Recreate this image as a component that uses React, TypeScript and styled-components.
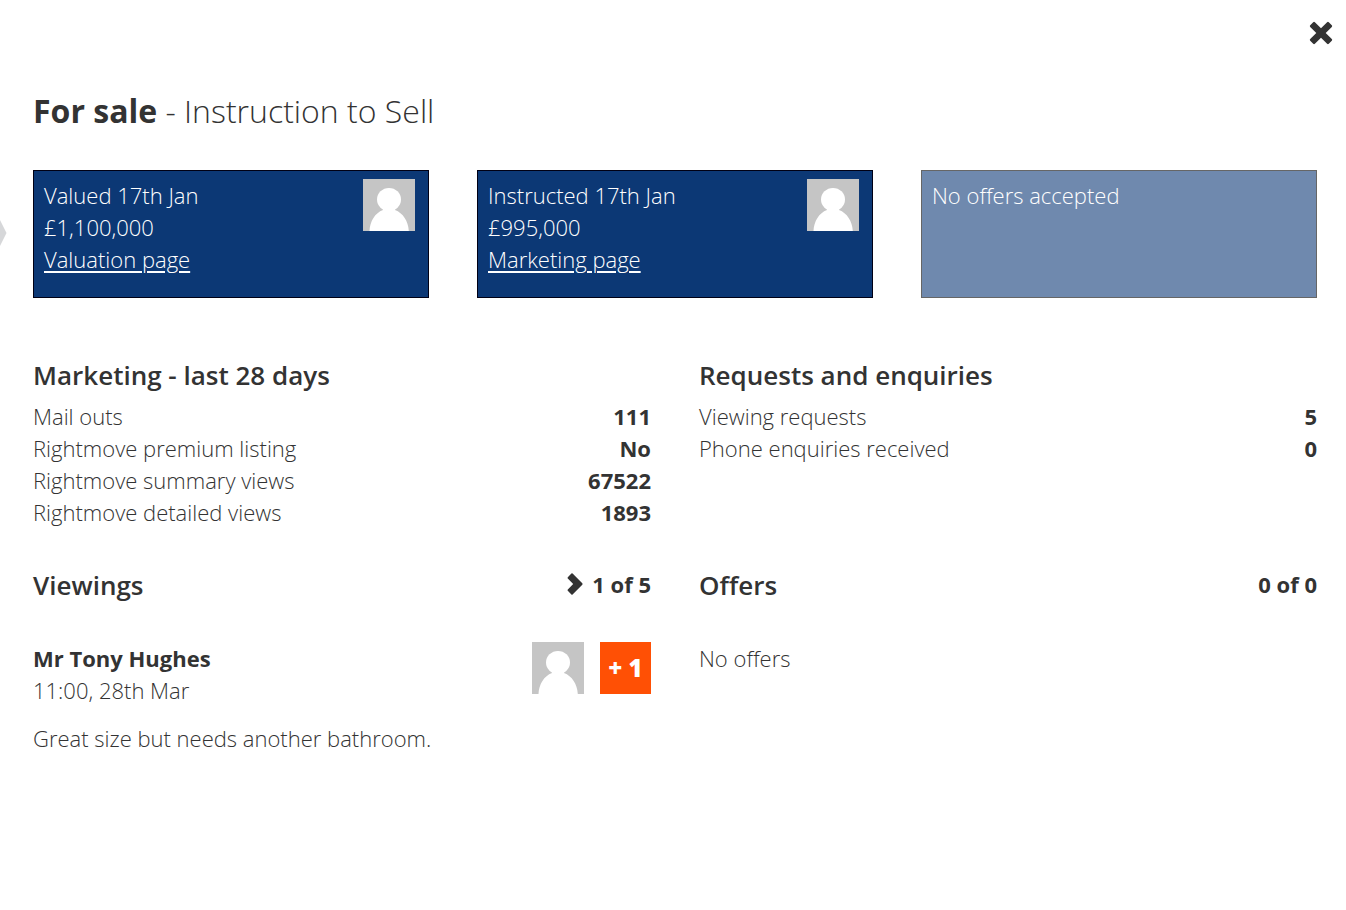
import React from "react";
import styled, { createGlobalStyle } from "styled-components";

const GlobalStyle = createGlobalStyle`
  *, *::before, *::after { box-sizing: border-box; }
  body {
    margin: 0;
    background: #fff;
    color: #333;
    font-family: "Open Sans", "Liberation Sans", sans-serif;
    font-size: 22px;
    font-weight: 300;
    line-height: 32px;
  }
  h1, h2, h3, p, dl, dd { margin: 0; }
`;

const Panel = styled.main`
  position: relative;
  min-height: 100vh;
  padding: 16px 29px 48px 33px;
`;

const PreviousButton = styled.button`
  position: absolute;
  top: 216px;
  left: 0;
  display: flex;
  padding: 0;
  border: 0;
  background: none;
  color: #d6d7d9;
  cursor: pointer;
`;

const TopBar = styled.div`
  display: flex;
  justify-content: flex-end;
  margin-right: -21px;
`;

const CloseButton = styled.button`
  display: flex;
  padding: 5px;
  border: 0;
  background: none;
  color: #333;
  cursor: pointer;
`;

const Title = styled.h1`
  margin-top: 39px;
  font-size: 32px;
  font-weight: 300;
  line-height: 44px;

  strong { font-weight: 700; }
`;

const Cards = styled.section`
  display: grid;
  grid-template-columns: repeat(3, 1fr);
  gap: 48px;
  margin-top: 37px;
`;

const Card = styled.article<{ $muted?: boolean }>`
  display: flex;
  justify-content: space-between;
  align-items: flex-start;
  min-height: 128px;
  padding: 8px 13px 20px 10px;
  border: 1px solid ${({ $muted }) => ($muted ? "#666" : "#000014")};
  background: ${({ $muted }) => ($muted ? "#6f89ae" : "#0c3875")};
  color: #fff;
`;

const CardLink = styled.a`
  color: inherit;
  text-decoration: underline;
  text-decoration-thickness: 2px;
  text-underline-offset: 3px;
`;

const Columns = styled.div`
  display: grid;
  grid-template-columns: repeat(2, 1fr);
  gap: 40px 48px;
  margin-top: 60px;
`;

const SectionHeader = styled.header`
  display: flex;
  justify-content: space-between;
  align-items: flex-start;
`;

const SectionTitle = styled.h2`
  font-size: 26px;
  font-weight: 600;
  line-height: 34px;
`;

const Stats = styled.dl`
  margin-top: 8px;
`;

const Stat = styled.div`
  display: flex;
  justify-content: space-between;

  dd { font-weight: 700; }
`;

const Counter = styled.div`
  display: flex;
  align-items: center;
  gap: 9px;
  font-weight: 700;
`;

const NextButton = styled.button`
  display: flex;
  padding: 0;
  border: 0;
  background: none;
  color: #333;
  cursor: pointer;
`;

const Entry = styled.div`
  display: flex;
  justify-content: space-between;
  margin-top: 40px;
`;

const Name = styled.h3`
  font-size: 22px;
  font-weight: 700;
  line-height: 32px;
`;

const People = styled.div`
  display: flex;
  align-items: flex-start;
  gap: 16px;
`;

const MoreButton = styled.button`
  width: 51px;
  height: 52px;
  padding: 0;
  border: 0;
  background: #ff5005;
  color: #fff;
  font: inherit;
  font-size: 24px;
  font-weight: 800;
  cursor: pointer;
`;

const Feedback = styled.p`
  margin-top: 16px;
`;

const AvatarImage = styled.svg`
  display: block;
  flex: none;
`;

const Avatar = () => (
  <AvatarImage width="52" height="52" viewBox="0 0 52 52" role="img" aria-label="Agent">
    <path fill="#c5c5c5" d="M0 0h52v52H0z" />
    <ellipse cx="26" cy="20.500" rx="12" ry="11.500" fill="#fff" />
    <path fill="#fff" d="M6.500 52C7 42 12 34 20 31v-3h12v3c8 3 13.300 11 13.800 21z" />
  </AvatarImage>
);

const marketing = [
  ["Mail outs", "111"],
  ["Rightmove premium listing", "No"],
  ["Rightmove summary views", "67522"],
  ["Rightmove detailed views", "1893"],
];

const enquiries = [
  ["Viewing requests", "5"],
  ["Phone enquiries received", "0"],
];

const StatList = ({ items }: { items: string[][] }) => (
  <Stats>
    {items.map(([label, value]) => (
      <Stat key={label}>
        <dt>{label}</dt>
        <dd>{value}</dd>
      </Stat>
    ))}
  </Stats>
);

export default function App() {
  return (
    <>
      <GlobalStyle />
      <Panel>
        <PreviousButton type="button" aria-label="Previous">
          <svg width="7" height="34" viewBox="0 0 7 34" fill="currentColor">
            <path d="M0 4l6.500 13L0 30z" />
          </svg>
        </PreviousButton>
        <TopBar>
          <CloseButton type="button" aria-label="Close">
            <svg width="24" height="24" viewBox="0 0 24 24" fill="currentColor">
              <path d="M4.200 1.200a1.200 1.200 0 0 1 1.700 0L12 7.300l6.100-6.100a1.200 1.200 0 0 1 1.700 0l3 3a1.200 1.200 0 0 1 0 1.700L16.700 12l6.100 6.100a1.200 1.200 0 0 1 0 1.700l-3 3a1.200 1.200 0 0 1-1.700 0L12 16.700l-6.100 6.100a1.200 1.200 0 0 1-1.700 0l-3-3a1.200 1.200 0 0 1 0-1.700L7.300 12 1.200 5.900a1.200 1.200 0 0 1 0-1.700z" />
            </svg>
          </CloseButton>
        </TopBar>
        <Title>
          <strong>For sale</strong> - Instruction to Sell
        </Title>

        <Cards>
          <Card>
            <div>
              <p>Valued 17th Jan</p>
              <p>£1,100,000</p>
              <CardLink href="#valuation">Valuation page</CardLink>
            </div>
            <Avatar />
          </Card>
          <Card>
            <div>
              <p>Instructed 17th Jan</p>
              <p>£995,000</p>
              <CardLink href="#marketing">Marketing page</CardLink>
            </div>
            <Avatar />
          </Card>
          <Card $muted>
            <p>No offers accepted</p>
          </Card>
        </Cards>

        <Columns>
          <section>
            <SectionHeader>
              <SectionTitle>Marketing - last 28 days</SectionTitle>
            </SectionHeader>
            <StatList items={marketing} />
          </section>
          <section>
            <SectionHeader>
              <SectionTitle>Requests and enquiries</SectionTitle>
            </SectionHeader>
            <StatList items={enquiries} />
          </section>
          <section>
            <SectionHeader>
              <SectionTitle>Viewings</SectionTitle>
              <Counter>
                <NextButton type="button" aria-label="Next viewing">
                  <svg width="16" height="22" viewBox="0 0 16 22" fill="currentColor">
                    <path d="M.8 4.300L4.400.600Q5 .1 5.600.600L15.300 10.300Q15.900 11 15.300 11.700L5.600 21.400Q5 21.900 4.400 21.400L.8 17.700Q.2 17 .8 16.400L6.200 11 .8 5.600Q.2 5 .8 4.300z" />
                  </svg>
                </NextButton>
                <span>1 of 5</span>
              </Counter>
            </SectionHeader>
            <Entry>
              <div>
                <Name>Mr Tony Hughes</Name>
                <p>11:00, 28th Mar</p>
              </div>
              <People>
                <Avatar />
                <MoreButton type="button">+ 1</MoreButton>
              </People>
            </Entry>
            <Feedback>Great size but needs another bathroom.</Feedback>
          </section>
          <section>
            <SectionHeader>
              <SectionTitle>Offers</SectionTitle>
              <Counter>0 of 0</Counter>
            </SectionHeader>
            <Entry>
              <p>No offers</p>
            </Entry>
          </section>
        </Columns>
      </Panel>
    </>
  );
}
